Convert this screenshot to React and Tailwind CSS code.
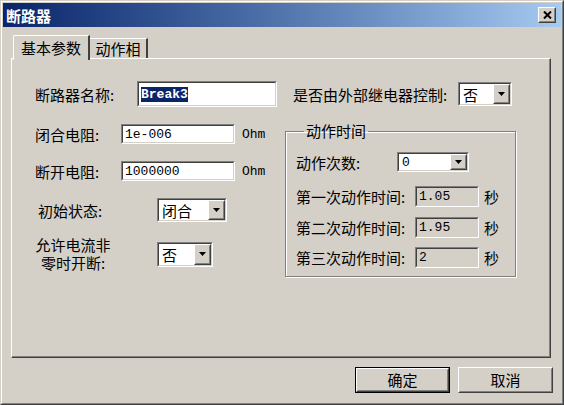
import React from 'react';

const font = "font-['Noto_Sans_CJK_SC','Noto_Sans',sans-serif]";
const mono = "font-['Liberation_Mono',monospace]";

function Sunken({ className = '', inner = '', children }) {
    return (
        <div className={`border border-t-[#808080] border-l-[#808080] border-r-white border-b-white ${className}`}>
            <div className={`h-full w-full border border-t-[#404040] border-l-[#404040] border-r-[#d4d0c8] border-b-[#d4d0c8] ${inner}`}>
                {children}
            </div>
        </div>
    );
}

function Raised({ className = '', inner = '', children }) {
    return (
        <div className={`border border-t-white border-l-white border-r-[#404040] border-b-[#404040] ${className}`}>
            <div className={`h-full w-full border border-t-[#d4d0c8] border-l-[#d4d0c8] border-r-[#808080] border-b-[#808080] ${inner}`}>
                {children}
            </div>
        </div>
    );
}

function Field({ w, h = 'h-[20px]', gray, children }) {
    return (
        <Sunken className={`${w} ${h}`} inner={`flex items-center pl-[2px] ${gray ? 'bg-[#d4d0c8]' : 'bg-white'} ${mono} text-[13px] text-black`}>
            {children}
        </Sunken>
    );
}

function Combo({ w, h, value, isMono }) {
    return (
        <Sunken className={`${w} ${h}`} inner="flex bg-white">
            <div className={`flex-1 flex items-center pl-[3px] ${isMono ? `${mono} text-[13px]` : 'text-[15px]'}`}>{value}</div>
            <Raised className="w-[17px] h-full" inner="flex items-center justify-center bg-[#d4d0c8]">
                <svg width="7" height="4" viewBox="0 0 7 4"><path d="M0 0h7L3.5 4z" fill="#000" /></svg>
            </Raised>
        </Sunken>
    );
}

export default function App() {
    return (
        <div className={`w-[564px] h-[405px] bg-[#d4d0c8] border border-t-[#d4d0c8] border-l-[#d4d0c8] border-r-[#404040] border-b-[#404040] ${font} text-black`}>
            <div className="h-full border border-t-white border-l-white border-r-[#808080] border-b-[#808080] p-[1px] flex flex-col">
                {/* title bar */}
                <div className="h-[24px] shrink-0 flex items-center justify-between pl-[3px] pr-[5px] bg-linear-to-r from-[#0a246a] to-[#a6caf0]">
                    <span className="text-white font-bold text-[15px] leading-none">断路器</span>
                    <Raised className="w-[18px] h-[16px]" inner="flex items-center justify-center bg-[#d4d0c8]">
                        <svg width="9" height="8" viewBox="0 0 9 8"><path d="M1 0.5l7 7M8 0.5l-7 7" stroke="#000" strokeWidth="2" /></svg>
                    </Raised>
                </div>

                <div className="flex-1 flex flex-col pt-[8px] pl-[8px] pr-[10px]">
                    {/* tabs */}
                    <div className="flex items-end h-[23px] pl-[2px]">
                        <div className="relative z-10 h-[25px] -mb-[2px] w-[77px] bg-[#d4d0c8] border-t border-l border-white border-r-2 border-r-[#404040] rounded-tl-[2px] flex items-start justify-center pt-[3px] text-[15px] leading-[17px]">
                            基本参数
                        </div>
                        <div className="h-[20px] w-[58px] border-t border-white border-r-2 border-r-[#404040] flex items-start justify-center pt-[1px] text-[15px] leading-[17px]">
                            动作相
                        </div>
                    </div>

                    {/* panel */}
                    <div className="h-[300px] border border-t-white border-l-white border-r-[#404040] border-b-[#404040]">
                        <div className="h-full border-r border-b border-r-[#808080] border-b-[#808080] flex text-[15px] leading-[17px]">
                            {/* left column */}
                            <div className="ml-[23px] w-[242px] flex flex-col pt-[22px]">
                                <div className="flex items-center h-[26px]">
                                    <span className="w-[102px]">断路器名称:</span>
                                    <Field w="w-[140px]" h="h-[26px]">
                                        <span className="bg-[#0a246a] text-white font-bold leading-[15px]">Break3</span>
                                    </Field>
                                </div>
                                <div className="flex items-center h-[20px] mt-[17px]">
                                    <span className="w-[86px]">闭合电阻:</span>
                                    <Field w="w-[114px]">1e-006</Field>
                                    <span className={`ml-[7px] ${mono} text-[13px]`}>Ohm</span>
                                </div>
                                <div className="flex items-center h-[20px] mt-[17px]">
                                    <span className="w-[86px]">断开电阻:</span>
                                    <Field w="w-[114px]">1000000</Field>
                                    <span className={`ml-[7px] ${mono} text-[13px]`}>Ohm</span>
                                </div>
                                <div className="flex items-center h-[24px] mt-[17px]">
                                    <span className="w-[122px] pl-[3px]">初始状态:</span>
                                    <Combo w="w-[70px]" h="h-[24px]" value="闭合" />
                                </div>
                                <div className="flex items-center mt-[14px]">
                                    <span className="w-[122px] flex flex-col items-start leading-[18px]">
                                        <span className="w-[76px] text-center">允许电流非</span>
                                        <span className="w-[76px] text-center">零时开断:</span>
                                    </span>
                                    <Combo w="w-[56px]" h="h-[25px]" value="否" />
                                </div>
                            </div>

                            {/* right column */}
                            <div className="ml-[8px] w-[231px] flex flex-col pt-[23px]">
                                <div className="flex items-center h-[24px] pl-[8px]">
                                    <span className="w-[165px]">是否由外部继电器控制:</span>
                                    <Combo w="w-[54px]" h="h-[24px]" value="否" />
                                </div>
                                <fieldset className="mt-[16px] border border-[#808080] shadow-[1px_1px_0_#fff,inset_1px_1px_0_#fff] pl-[10px] pb-[8px]">
                                    <legend className="ml-[8px] px-[2px] leading-[18px]">动作时间</legend>
                                    <div className="flex items-center h-[20px] mt-[12px]">
                                        <span className="w-[101px]">动作次数:</span>
                                        <Combo w="w-[72px]" h="h-[20px]" value="0" isMono />
                                    </div>
                                    <div className="flex items-center h-[21px] mt-[14px]">
                                        <span className="w-[119px]">第一次动作时间:</span>
                                        <Field w="w-[64px]" h="h-[21px]" gray>1.05</Field>
                                        <span className="ml-[5px]">秒</span>
                                    </div>
                                    <div className="flex items-center h-[21px] mt-[10px]">
                                        <span className="w-[119px]">第二次动作时间:</span>
                                        <Field w="w-[64px]" h="h-[21px]" gray>1.95</Field>
                                        <span className="ml-[5px]">秒</span>
                                    </div>
                                    <div className="flex items-center h-[21px] mt-[9px]">
                                        <span className="w-[119px]">第三次动作时间:</span>
                                        <Field w="w-[64px]" h="h-[21px]" gray>2</Field>
                                        <span className="ml-[5px]">秒</span>
                                    </div>
                                </fieldset>
                            </div>
                        </div>
                    </div>

                    {/* buttons */}
                    <div className="flex justify-end gap-[8px] mt-[9px] -mr-[2px] text-[15px]">
                        <div className="border border-black">
                            <Raised className="w-[93px] h-[24px]" inner="flex items-center justify-center bg-[#d4d0c8]">确定</Raised>
                        </div>
                        <Raised className="w-[95px] h-[26px]" inner="flex items-center justify-center bg-[#d4d0c8]">取消</Raised>
                    </div>
                </div>
            </div>
        </div>
    );
}
